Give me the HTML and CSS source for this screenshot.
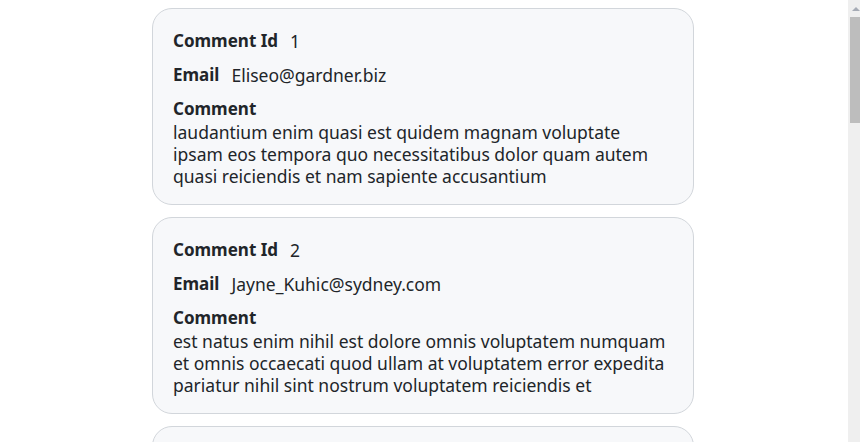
FILE: index.html
```html
<!DOCTYPE html>
<html lang="en">
<head>
<meta charset="utf-8">
<title>Comments</title>
<link rel="stylesheet" href="styles.css">
</head>
<body>
<main class="list">
  <article class="card">
    <div class="row"><span class="label">Comment Id</span><span class="value">1</span></div>
    <div class="row"><span class="label">Email</span><span class="value">Eliseo@gardner.biz</span></div>
    <div class="label block">Comment</div>
    <p class="body">laudantium enim quasi est quidem magnam voluptate ipsam eos tempora quo necessitatibus dolor quam autem quasi reiciendis et nam sapiente accusantium</p>
  </article>
  <article class="card">
    <div class="row"><span class="label">Comment Id</span><span class="value">2</span></div>
    <div class="row"><span class="label">Email</span><span class="value">Jayne_Kuhic@sydney.com</span></div>
    <div class="label block">Comment</div>
    <p class="body">est natus enim nihil est dolore omnis voluptatem numquam et omnis occaecati quod ullam at voluptatem error expedita pariatur nihil sint nostrum voluptatem reiciendis et</p>
  </article>
  <article class="card">
    <div class="row"><span class="label">Comment Id</span><span class="value">3</span></div>
    <div class="row"><span class="label">Email</span><span class="value">Nikita@garfield.biz</span></div>
    <div class="label block">Comment</div>
    <p class="body">quia molestiae reprehenderit quasi aspernatur aut expedita occaecati aliquam eveniet laudantium omnis quibusdam delectus saepe quia accusamus maiores nam est cum et ducimus et vero voluptates excepturi deleniti ratione</p>
  </article>
</main>
<div class="scrollbar" aria-hidden="true">
  <div class="arrow"></div>
  <div class="thumb"></div>
</div>
</body>
</html>
```
FILE: styles.css
```css
html, body {
  margin: 0;
  padding: 0;
  background: #ffffff;
}
body {
  padding: 8px 0;
  font-family: "Noto Sans", "Noto Sans CJK KR", sans-serif;
  font-size: 17px;
  color: #212529;
}
.list {
  display: flex;
  flex-direction: column;
  gap: 12px;
  width: 542px;
  margin-left: 152px;
}
.card {
  box-sizing: border-box;
  background: #f7f8fa;
  border: 1px solid #d2d6db;
  border-radius: 20px;
  padding: 21px 20px 17px 20px;
}
.row {
  display: flex;
  align-items: center;
  gap: 12px;
  height: 22px;
  line-height: 22px;
  margin-bottom: 12px;
}
.label {
  font-weight: 700;
  font-size: 17px;
}
.value {
  font-size: 17.5px;
}
.block {
  line-height: 22px;
}
.body {
  margin: 1px 0 0 0;
  font-size: 17.5px;
  line-height: 22px;
}
.scrollbar {
  position: fixed;
  top: 0;
  right: 0;
  width: 12px;
  height: 100%;
  background: #efefef;
}
.arrow {
  width: 0;
  height: 0;
  margin: 7px 0 0 4px;
  border-left: 4px solid transparent;
  border-right: 4px solid transparent;
  border-bottom: 4px solid #a6abb5;
}
.thumb {
  margin: 6px 0 0 2px;
  width: 10px;
  height: 106px;
  background: #bdbdbd;
}
```
